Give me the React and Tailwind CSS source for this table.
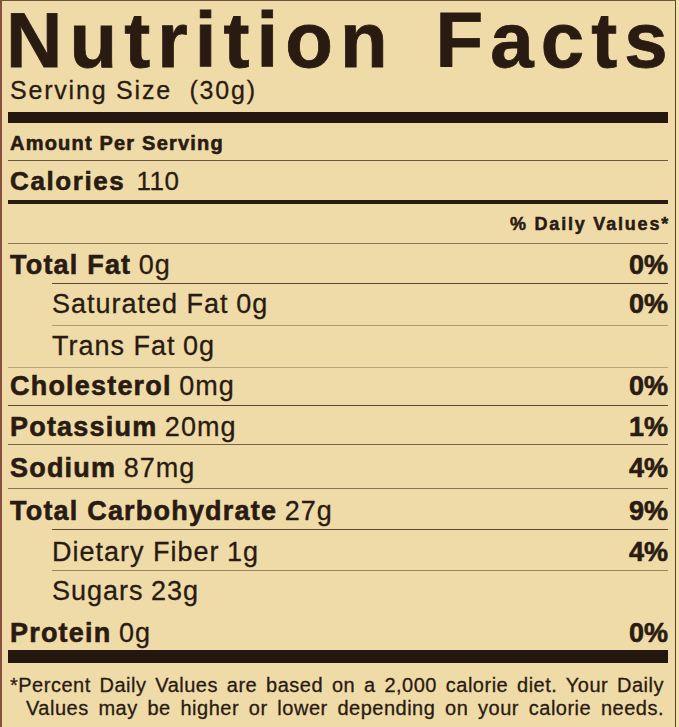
import React from 'react';

const ink = 'text-[#2a1b12]';

const rows = [
  { name: 'Total Fat', amt: '0g', dv: '0%', bold: true, row: 'h-[39px] pt-[4px]', line: 'ml-[44px] h-px bg-[#5c4632]' },
  { name: 'Saturated Fat', amt: '0g', dv: '0%', indent: true, row: 'h-[41px]', line: 'ml-[44px] h-px bg-[#b09a74]' },
  { name: 'Trans Fat', amt: '0g', indent: true, row: 'h-[41px]', line: 'h-px bg-[#b8a37c]' },
  { name: 'Cholesterol', amt: '0mg', dv: '0%', bold: true, row: 'h-[37px]', line: 'h-px bg-[#5c4632]' },
  { name: 'Potassium', amt: '20mg', dv: '1%', bold: true, row: 'h-[38px] pt-[5px]', line: 'h-px bg-[#7a6448]' },
  { name: 'Sodium', amt: '87mg', dv: '4%', bold: true, row: 'h-[43px] pt-[4px]', line: 'h-px bg-[#8a7454]' },
  { name: 'Total Carbohydrate', amt: '27g', dv: '9%', bold: true, row: 'h-[40px] pt-[5px]', line: 'ml-[44px] h-px bg-[#5c4632]' },
  { name: 'Dietary Fiber', amt: '1g', dv: '4%', indent: true, row: 'h-[40px] pt-[5px]', line: 'ml-[44px] h-px bg-[#9a845e]' },
  { name: 'Sugars', amt: '23g', indent: true, row: 'h-[40px] pt-[1px]' },
  { name: 'Protein', amt: '0g', dv: '0%', bold: true, row: 'h-[39px] pt-[5px]' },
];

const NutrientRow = ({ r }) => (
  <>
    <div className={`flex items-center justify-between ${r.row}`}>
      <div className={`text-[27px] leading-none whitespace-nowrap ${r.indent ? 'pl-[44px]' : 'pl-[2px]'}`}>
        {r.bold ? (
          <span className="font-bold tracking-[1.2px] [-webkit-text-stroke:0.6px]">{r.name}</span>
        ) : (
          <span className="tracking-[1px]">{r.name}</span>
        )}{' '}
        <span className="tracking-[1px]">{r.amt}</span>
      </div>
      {r.dv && (
        <div className="text-[27px] leading-none font-bold [-webkit-text-stroke:0.6px]">{r.dv}</div>
      )}
    </div>
    {r.line && <div className={r.line} />}
  </>
);

export default function App() {
  return (
    <div className="w-[679px] h-[727px] bg-[#f3e2b0] overflow-hidden" style={{ fontFamily: '"Liberation Sans", Arial, sans-serif' }}>
      <div className={`w-[676px] h-[727px] bg-[#efdba8] border-t border-t-[#6e5440] border-l-2 border-l-[#8a4e3e] border-r border-r-[#5a4332] pl-[6px] pr-[7px] [-webkit-text-stroke:0.3px] ${ink}`}>
        <div className="h-[77px] pt-[2px] -ml-[2px] -mr-[6px] text-[78px] leading-[75px] font-bold tracking-[7.1px] [word-spacing:12px] whitespace-nowrap [-webkit-text-stroke:0.8px]">
          Nutrition Facts
        </div>
        <div className="pl-[2px] text-[25px] leading-[24px] tracking-[1.8px] whitespace-pre">Serving Size  (30g)</div>
        <div className="mt-[10px] h-[11px] bg-[#24170f]" />

        <div className="h-[37px] pt-[3px] pl-[2px] flex items-center">
          <span className="text-[20px] leading-none font-bold tracking-[1.2px] [-webkit-text-stroke:0.6px]">Amount Per Serving</span>
        </div>
        <div className="h-px bg-[#6b5540]" />

        <div className="h-[39px] pt-[1px] pl-[2px] flex items-center text-[26px] leading-none">
          <span className="font-bold tracking-[1.6px] [-webkit-text-stroke:0.6px]">Calories</span>
          <span className="ml-[11px] tracking-[0.5px]">110</span>
        </div>
        <div className="h-[4px] bg-[#2a1b12]" />

        <div className="h-[39px] flex items-center justify-end">
          <span className="text-[18px] leading-none font-bold tracking-[1.8px] [-webkit-text-stroke:0.5px] -mr-[2px]">% Daily Values*</span>
        </div>
        <div className="h-px bg-[#8c7658]" />

        {rows.map((r) => (
          <NutrientRow key={r.name} r={r} />
        ))}

        <div className="h-[13px] bg-[#24170f]" />

        <div className="pt-[11px] text-[20px] leading-[23px] tracking-[0.5px]">
          <div className="pl-[2px] pr-[4px] text-justify [text-align-last:justify] whitespace-nowrap">
            *Percent Daily Values are based on a 2,000 calorie diet. Your Daily
          </div>
          <div className="pl-[18px] pr-[4px] text-justify [text-align-last:justify] whitespace-nowrap">
            Values may be higher or lower depending on your calorie needs.
          </div>
        </div>
      </div>
    </div>
  );
}
